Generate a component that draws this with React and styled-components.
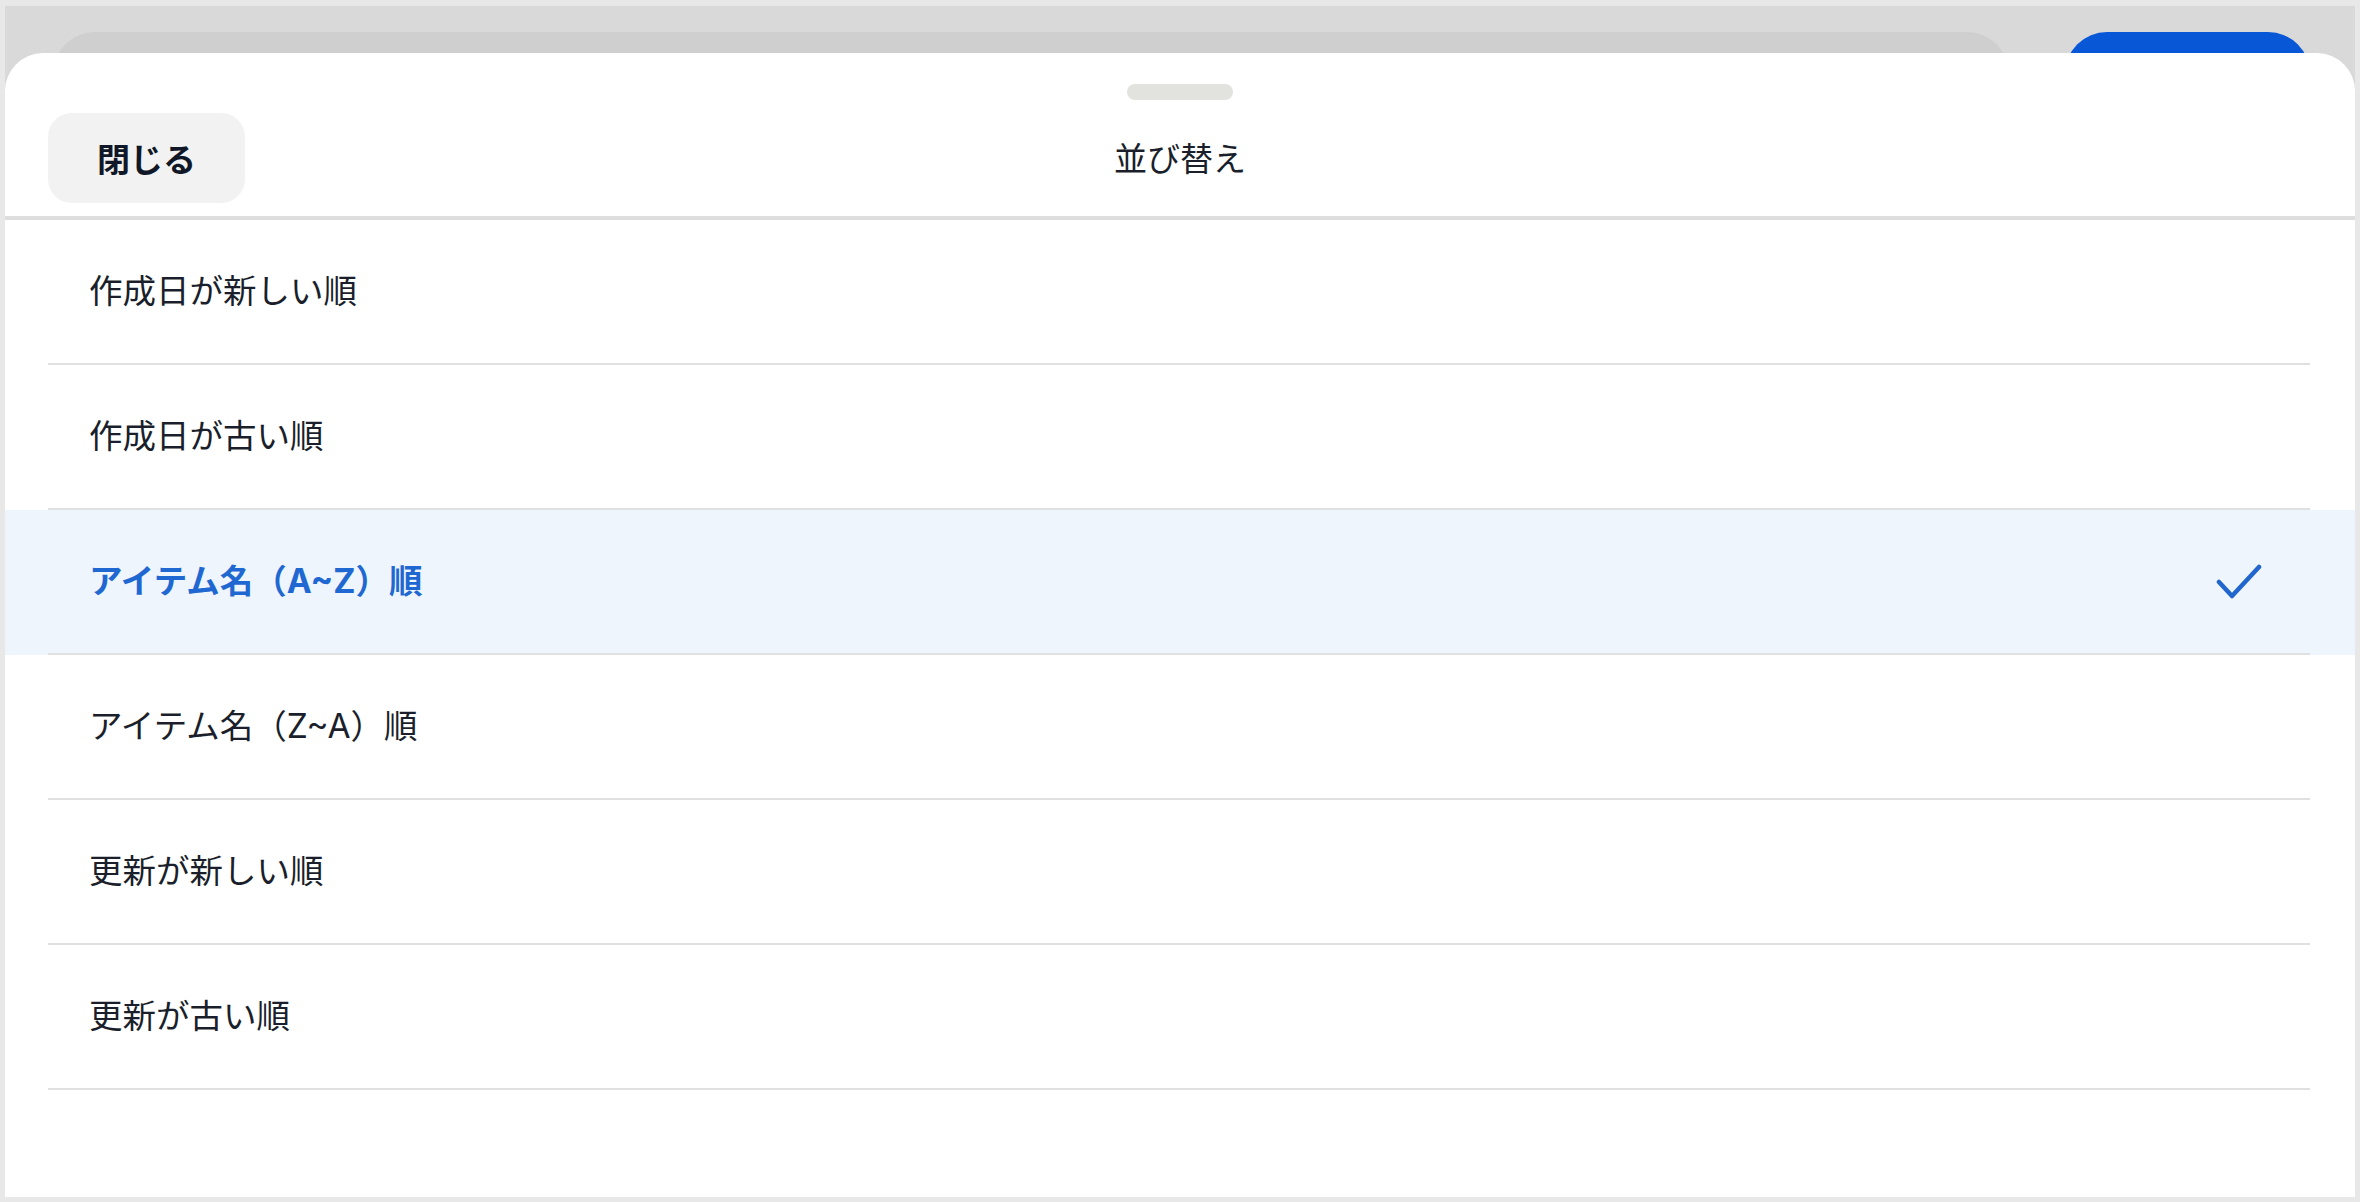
import React from "react";
import styled, { createGlobalStyle } from "styled-components";

const GlobalStyle = createGlobalStyle`
  html, body {
    margin: 0;
    padding: 0;
    background: #e8e8e8;
  }
  * { box-sizing: border-box; }
  body {
    font-family: "Noto Sans CJK JP", "Noto Sans", sans-serif;
  }
`;

const Frame = styled.div`
  width: 2360px;
  height: 1202px;
  padding: 6px 5px 5px 5px;
  background: #e8e8e8;
`;

const Screen = styled.div`
  position: relative;
  width: 100%;
  height: 100%;
  background: #d9d9d9;
  overflow: hidden;
`;

const TopBar = styled.div`
  display: flex;
  align-items: flex-start;
  gap: 56px;
  padding: 26px 45px 0 48px;
`;

const SearchField = styled.div`
  flex: 1;
  height: 84px;
  border-radius: 42px;
  background: #cfcfcf;
`;

const PrimaryButton = styled.div`
  width: 245px;
  height: 84px;
  border-radius: 42px;
  background: #0857d6;
`;

const Sheet = styled.div`
  position: absolute;
  top: 47px;
  left: 0;
  right: 0;
  bottom: 0;
  background: #ffffff;
  border-radius: 38px 38px 0 0;
  display: flex;
  flex-direction: column;
`;

const HandleArea = styled.div`
  display: flex;
  justify-content: center;
  padding-top: 31px;
`;

const Handle = styled.div`
  width: 106px;
  height: 16px;
  border-radius: 8px;
  background: #e2e2df;
`;

const Header = styled.div`
  display: grid;
  grid-template-columns: 1fr auto 1fr;
  align-items: center;
  padding: 13px 43px 13px 43px;
  border-bottom: 4px solid #dedede;
`;

const CloseButton = styled.button`
  justify-self: start;
  width: 197px;
  height: 90px;
  border: none;
  border-radius: 24px;
  background: #f2f2f2;
  color: #101828;
  font-family: "Noto Sans CJK JP", "Noto Sans", sans-serif;
  font-size: 33px;
  font-weight: 700;
  padding: 0;
  cursor: pointer;
`;

const Title = styled.div`
  color: #1a1f2b;
  font-size: 33px;
  font-weight: 400;
  line-height: 1;
  margin-top: -2px;
`;

const List = styled.div`
  display: flex;
  flex-direction: column;
`;

const Row = styled.div`
  background: ${(p) => (p.$selected ? "#eef5fc" : "#ffffff")};
`;

const RowInner = styled.div`
  height: 145px;
  margin: 0 45px 0 43px;
  padding: 0 48px 0 41px;
  display: flex;
  align-items: center;
  justify-content: space-between;
  border-bottom: 2px solid #e0e0e0;
`;

const RowLabel = styled.span`
  font-family: Inter, "Noto Sans CJK JP", sans-serif;
  font-size: 33.5px;
  line-height: 1;
  color: ${(p) => (p.$selected ? "#1f68d1" : "#1a1f2b")};
  font-weight: ${(p) => (p.$selected ? 700 : 400)};
`;

const Check = () => (
  <svg width="46" height="36" viewBox="0 0 46 36" fill="none">
    <polyline
      points="3,18 16,32 43,3"
      stroke="#2166cc"
      strokeWidth="4.5"
      strokeLinecap="round"
      strokeLinejoin="round"
    />
  </svg>
);

const options = [
  "作成日が新しい順",
  "作成日が古い順",
  "アイテム名（A~Z）順",
  "アイテム名（Z~A）順",
  "更新が新しい順",
  "更新が古い順",
];

export default function App() {
  const selected = 2;
  return (
    <>
      <GlobalStyle />
      <Frame>
        <Screen>
          <TopBar>
            <SearchField />
            <PrimaryButton />
          </TopBar>
          <Sheet>
            <HandleArea>
              <Handle />
            </HandleArea>
            <Header>
              <CloseButton>閉じる</CloseButton>
              <Title>並び替え</Title>
              <div />
            </Header>
            <List>
              {options.map((o, i) => (
                <Row key={o} $selected={i === selected}>
                  <RowInner>
                    <RowLabel $selected={i === selected}>{o}</RowLabel>
                    {i === selected && <Check />}
                  </RowInner>
                </Row>
              ))}
            </List>
          </Sheet>
        </Screen>
      </Frame>
    </>
  );
}
